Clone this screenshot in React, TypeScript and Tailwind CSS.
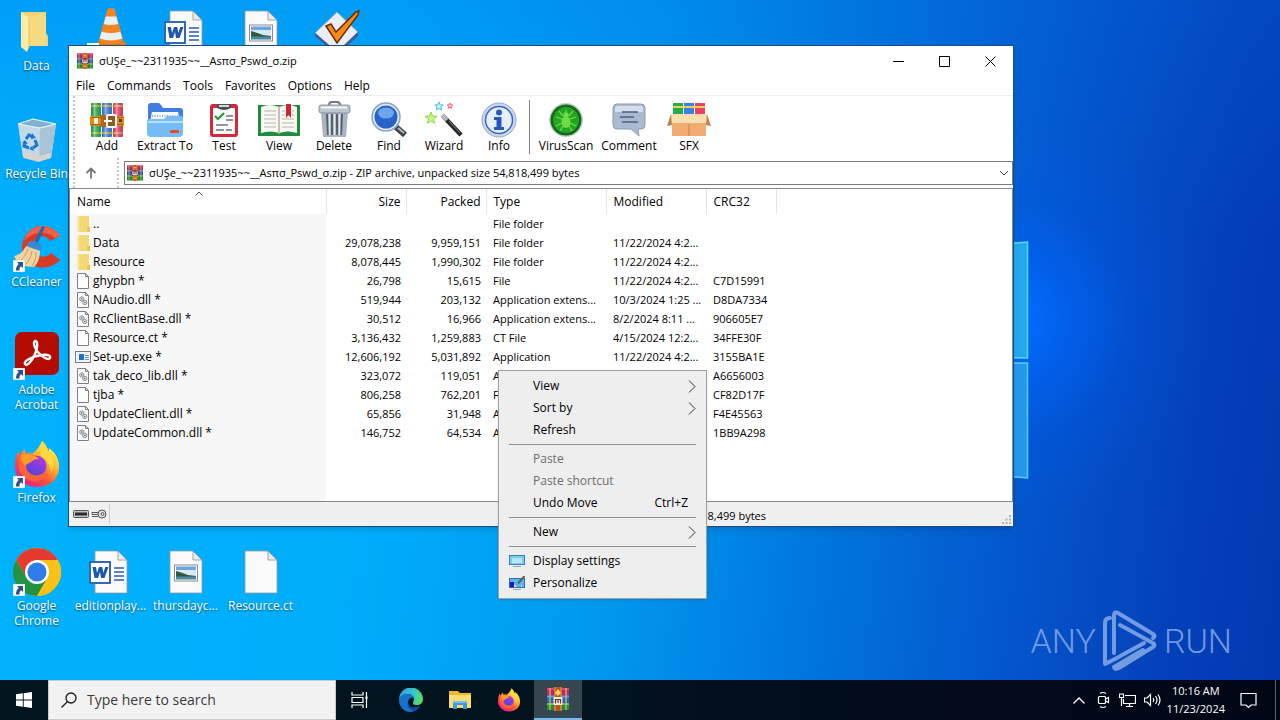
import type { ReactNode } from "react";

/* ---------- small drawing helpers ---------- */

function ShortcutArrow() {
  return (
    <svg viewBox="0 0 12 12" className="absolute bottom-0 left-0 h-3 w-3" aria-hidden="true">
      <rect width="12" height="12" fill="#fff" stroke="#c9d6e2" />
      <path d="M4 2h6v6L8.200 6.300C7 7 6.300 8.500 6.500 10.500H3C2.800 7.500 4 5.500 5.700 3.900z" fill="#2b4f8f" />
    </svg>
  );
}

function WinRarSmall({ className }: { className: string }) {
  return (
    <svg viewBox="0 0 16 16" className={className} aria-hidden="true">
      <rect x="0" y="0.500" width="16" height="5" fill="#a8266f" />
      <rect x="0" y="0.500" width="16" height="1.500" fill="#d8397f" />
      <rect x="0" y="5.500" width="16" height="5" fill="#2452b8" />
      <rect x="0" y="5.500" width="16" height="1.200" fill="#4b83e0" />
      <rect x="0" y="10.500" width="16" height="5" fill="#1b8a3d" />
      <rect x="0" y="10.500" width="16" height="1.300" fill="#45bd52" />
      <path d="M2 0.500v15M14 0.500v15" stroke="#e0b64a" strokeWidth="0.800" />
      <rect x="5.500" y="0" width="5" height="16" fill="#c0641c" />
      <path d="M6.200 0v16M9.800 0v16" stroke="#f0a040" strokeWidth="0.700" />
      <rect x="4.700" y="5.500" width="6.600" height="5.600" rx="1" fill="#7d2c22" />
      <path d="M5.900 6.300v3.500h4.200V6.300M8 6.800v3" stroke="#fff" strokeWidth="1" fill="none" />
      <circle cx="8" cy="2.800" r="0.800" fill="#ffe08a" />
      <circle cx="8" cy="13.300" r="0.800" fill="#ffe08a" />
    </svg>
  );
}

function WinRarTask() {
  return (
    <svg viewBox="0 0 24 24" className="h-6 w-6" aria-hidden="true">
      <rect x="1" y="1" width="22" height="7" fill="#b8246f" />
      <rect x="1" y="1" width="22" height="2" fill="#e0457f" />
      <rect x="1" y="8.500" width="22" height="7" fill="#2a63c4" />
      <rect x="1" y="8.500" width="22" height="2" fill="#5f9be8" />
      <rect x="1" y="16" width="22" height="7" fill="#1f8f3f" />
      <rect x="1" y="16" width="22" height="2" fill="#5cc65b" />
      <path d="M4 1v22M20 1v22" stroke="#e6bd52" strokeWidth="1.200" />
      <rect x="8" y="0" width="8" height="24" fill="#b5561b" />
      <path d="M9 0v24M15 0v24" stroke="#f0a040" strokeWidth="1" />
      <path d="M12 2l3 4-3 3-3-3z" fill="#ffd25a" />
      <rect x="7.500" y="10" width="9" height="8" rx="1" fill="#f7efe2" />
      <path d="M9.500 16.500v-4h5v4M12 13v3" stroke="#6b2b1a" strokeWidth="1.200" fill="none" />
    </svg>
  );
}

function Firefox({ className }: { className: string }) {
  return (
    <svg viewBox="0 0 48 48" className={className} aria-hidden="true">
      <defs>
        <linearGradient id="ffBody" x1="0.850" y1="0.100" x2="0.200" y2="0.950">
          <stop offset="0" stopColor="#fff44f" />
          <stop offset="0.350" stopColor="#ffb02e" />
          <stop offset="0.620" stopColor="#ff5a35" />
          <stop offset="1" stopColor="#f0188b" />
        </linearGradient>
        <linearGradient id="ffGlobe" x1="0.800" y1="0" x2="0.300" y2="1">
          <stop offset="0" stopColor="#b833e1" />
          <stop offset="1" stopColor="#5346d8" />
        </linearGradient>
      </defs>
      <path
        d="M5 11c1 2 1.500 3 2.500 4 1-3 2.500-5 4.500-6 0 2 .5 3.500 1.500 4.500 2-.5 4-.5 6 0C24 10 27 6 29 1c3 3 5 5 6 10 1-1 1-2 1-3 7 5 11 12 10 21C45 40 36 47 24 47S2 38 2 27c0-6 1-11 3-16z"
        fill="url(#ffBody)"
      />
      <circle cx="23" cy="26" r="10.500" fill="url(#ffGlobe)" />
      <path d="M7 16c3-2 8-2 13-1 3 1 5 2 6 4-3 0-6 1-7 3-3 1-6 2-6 5 1 6 7 9 13 8 4-1 6-3 8-6 1 7-5 12-12 12C12 41 6 34 6 25c0-4 0-6 1-9z" fill="#ff6a30" opacity="0.850" />
      <circle cx="23.500" cy="25.500" r="8.500" fill="url(#ffGlobe)" />
      <path d="M8 15c4-2 9-1 14 1 2 1 3 2 4 3-4 0-6 1-8 3-2 1-5 2-6 4-3-3-4-7-4-11z" fill="#ff9a2b" />
      <path d="M29 1c3 3 5 5 6 10 6 6 7 14 3 22 0-6-3-12-8-15-4-4-4-10-1-17z" fill="#ffd93b" />
    </svg>
  );
}

function FolderIcon({ className }: { className: string }) {
  return (
    <svg viewBox="0 0 28 42" className={className} aria-hidden="true">
      <path d="M0 1h25v21l2 3v10H8L0 34z" fill="#f2d272" />
      <path d="M0 1l8 6v29l-2 5-6-5z" fill="#ffeaa6" />
      <path d="M8 6l17-5v34H8z" fill="#f8dd88" opacity="0.700" />
      <path d="M8 7v30" stroke="#d9b95c" strokeWidth="0.800" />
    </svg>
  );
}

function Page({ children, className }: { children?: ReactNode; className: string }) {
  return (
    <svg viewBox="0 0 48 48" className={className} aria-hidden="true">
      <path d="M8 3h23l9 9v33H8z" fill="#fafafa" stroke="#9b9b9b" strokeWidth="0.800" />
      <path d="M31 3v9h9z" fill="#e7edf2" stroke="#8f8f8f" strokeWidth="0.800" />
      {children}
    </svg>
  );
}

function WordDoc() {
  return (
    <Page className="h-12 w-12">
      <path d="M27 20h10M27 24h10M27 28h10M27 32h10" stroke="#2b5cb0" strokeWidth="1.300" />
      <rect x="2" y="13" width="22" height="23" fill="#fff" />
      <rect x="3" y="14" width="20" height="21" fill="#fff" stroke="#1f57ad" strokeWidth="1.800" />
      <path d="M5.500 19l2 11h3.500l2-6 1 6h3.500l4-11h-3.200l-2 6-1-6h-3.300l-2 6-1-6z" fill="#1f57ad" />
    </Page>
  );
}

function ImageDoc() {
  return (
    <Page className="h-12 w-12">
      <rect x="12.500" y="17" width="23" height="16" fill="#fff" stroke="#8b8b8b" />
      <rect x="14" y="18.500" width="20" height="13" fill="#d5e9f7" />
      <rect x="14" y="18.500" width="20" height="3.500" fill="#6fa5dd" />
      <path d="M14 23l5 1.500 7 2.500 8 1v1H14z" fill="#2f5a3c" />
      <rect x="14" y="28.500" width="20" height="3" fill="#4a8aa8" />
    </Page>
  );
}

function Vlc() {
  return (
    <svg viewBox="0 0 48 48" className="h-12 w-12" aria-hidden="true">
      <path d="M10 34h28l5 10H5z" fill="#f07a12" />
      <path d="M20.500 1q3.500-2 7 0l9 32q-12.500 6-25 0z" fill="#f5841f" />
      <path d="M18.700 8.500h10.600l2 7.500q-7.300 2-14.600 0z" fill="#eceff1" />
      <path d="M14.700 23.500q9.300 3 18.600 0l2 7q-11.300 4-22.600 0z" fill="#eceff1" />
      <rect x="0" y="35" width="12" height="12" fill="#fff" />
      <path d="M4 38h5v5z" fill="#1c4f9c" />
    </svg>
  );
}

function CheckDiamond() {
  return (
    <svg viewBox="0 0 48 48" className="h-12 w-12" aria-hidden="true">
      <path d="M3 25L25 4l21 20-21 20z" fill="#e9edf4" stroke="#93a1b8" />
      <path d="M3 25l22 19 21-20v4L25 47 3 28z" fill="#41598c" />
      <path d="M14 18l5-2 5 8L44 4l3-1-1 4-21 28z" fill="#f58a1c" stroke="#6c2c08" strokeWidth="1.500" />
    </svg>
  );
}

function RecycleBin() {
  return (
    <svg viewBox="0 0 48 48" className="h-12 w-12" aria-hidden="true">
      <path d="M5 8l15-5 23 5-5 34-12 3-16-4z" fill="#a9c9dc" opacity="0.900" />
      <path d="M5 8l22 4 16-4-5 34-12 3-16-4z" fill="#c9dde9" opacity="0.850" />
      <path d="M27 12l16-4-5 34-12 3z" fill="#a5bfd0" opacity="0.850" />
      <path d="M5 8l15-5 23 5-16 4z" fill="#7fb2cf" stroke="#eef6fb" strokeWidth="1.200" />
      <path d="M9.500 36l16 4 13-3-1 5-12 4-15-4z" fill="#d8d3cd" />
      <g fill="none" stroke="#1a78d2" strokeWidth="3">
        <path d="M13 23l3-4 4 2" />
        <path d="M22 24l2 5-4 3" />
        <path d="M16 32l-5-2 1-4" />
      </g>
      <path d="M19 17l4 5-5 1zM21 35l-2-5-3 3zM9 27l3-3 3 4z" fill="#1a78d2" />
    </svg>
  );
}

function CCleaner() {
  return (
    <svg viewBox="0 0 48 48" className="h-12 w-12" aria-hidden="true">
      <path d="M47 12C41 2 28-1 19 5 8 12 6 27 13 36c8 10 25 10 34 0l-9-7c-4 5-12 5-15 0-4-5-3-12 1-15 5-3 10-2 13 3z" fill="#d93a25" />
      <path d="M47 12C41 2 28-1 19 5c-4 3-7 7-8 12 9-10 22-11 31-3z" fill="#ef6148" />
      <path d="M29 2l3 1-8 18-4-1z" fill="#2468b4" />
      <path d="M14 20c2-3 6-4 10-2 3 1 5 4 4 8l-14-3z" fill="#3c86d4" />
      <path d="M13 22l14 5c0 7-2 12-6 16C12 43 4 40 1 32c5-1 9-4 12-10z" fill="#f2d3a0" />
      <path d="M15 25c-2 6-5 9-8 12M19 27c-1 6-3 10-6 13M23 28c0 6-1 10-4 14" stroke="#c99d5e" strokeWidth="1" fill="none" />
    </svg>
  );
}

function Acrobat() {
  return (
    <svg viewBox="0 0 48 48" className="h-12 w-12" aria-hidden="true">
      <rect x="2" y="0" width="44" height="43" rx="7" fill="#b30b00" />
      <path
        d="M12 32c-2-3 8-8 17-9 6-1 9 1 8 3-2 3-9-2-13-7-3-4-4-9-2-10 3-1 3 7 0 13-3 7-8 13-10 10z"
        fill="none"
        stroke="#fff"
        strokeWidth="2.400"
      />
    </svg>
  );
}

function Chrome() {
  return (
    <svg viewBox="0 0 48 48" className="h-12 w-12" aria-hidden="true">
      <circle cx="24" cy="24" r="24" fill="#fbc116" />
      <path d="M24 0a24 24 0 0 1 20.800 12H24L13.600 30 3.200 12A24 24 0 0 1 24 0z" fill="#e33b2e" />
      <path d="M3.200 12A24 24 0 0 0 24 48l10.400-18-10.400-6-10.400 6z" fill="#229342" />
      <path d="M24 12h20.800A24 24 0 0 1 24 48l10.400-18z" fill="#fbc116" />
      <circle cx="24" cy="24" r="12" fill="#fff" />
      <circle cx="24" cy="24" r="9.600" fill="#2f7de9" />
    </svg>
  );
}

/* ---------- desktop ---------- */

type DesktopItem = { label: string; place: string; icon: ReactNode; shortcut?: boolean; hidden?: boolean };

const desktopItems: DesktopItem[] = [
  { label: "Data", place: "col-start-1 row-start-1", icon: <FolderIcon className="mr-1 h-[42px] w-7" /> },
  { label: "VLC media player", place: "col-start-2 row-start-1", icon: <Vlc />, hidden: true },
  { label: "Document", place: "col-start-3 row-start-1", icon: <WordDoc />, hidden: true },
  { label: "Picture", place: "col-start-4 row-start-1", icon: <ImageDoc />, hidden: true },
  { label: "Tasks", place: "col-start-5 row-start-1", icon: <CheckDiamond />, hidden: true },
  { label: "Recycle Bin", place: "col-start-1 row-start-2", icon: <RecycleBin /> },
  { label: "CCleaner", place: "col-start-1 row-start-3", icon: <CCleaner />, shortcut: true },
  { label: "Adobe Acrobat", place: "col-start-1 row-start-4", icon: <Acrobat />, shortcut: true },
  { label: "Firefox", place: "col-start-1 row-start-5", icon: <Firefox className="h-12 w-12" />, shortcut: true },
  { label: "Google Chrome", place: "col-start-1 row-start-6", icon: <Chrome />, shortcut: true },
  { label: "editionplay...", place: "col-start-2 row-start-6", icon: <WordDoc /> },
  { label: "thursdayc...", place: "col-start-3 row-start-6", icon: <ImageDoc /> },
  { label: "Resource.ct", place: "col-start-4 row-start-6", icon: <Page className="h-12 w-12" /> },
];

function DesktopIcons() {
  return (
    <div className="absolute top-2 left-0 grid auto-rows-[108px] grid-cols-[73px_repeat(4,75px)]">
      {desktopItems.map((item) => (
        <button
          key={item.label}
          aria-label={item.label}
          className={"flex flex-col items-center gap-0.5 text-xs leading-[15px] text-white [text-shadow:0_1px_2px_rgba(0,0,0,0.6)] " + item.place}
        >
          <span className="relative flex h-12 w-12 items-center justify-center">
            {item.icon}
            {item.shortcut && <ShortcutArrow />}
          </span>
          {!item.hidden && <span className="px-1 text-center">{item.label}</span>}
        </button>
      ))}
    </div>
  );
}

function Wallpaper() {
  return (
    <div className="absolute inset-0 bg-[linear-gradient(97deg,#00b2fe_0%,#00aefc_30%,#0098ee_50%,#0074dc_66%,#0455cc_80%,#0340b8_92%,#0238b0_100%)]">
      <div className="absolute inset-0 bg-[radial-gradient(circle_at_1010px_320px,rgba(0,112,255,1)_0,rgba(0,100,250,0.65)_60px,rgba(0,90,235,0.25)_120px,rgba(0,90,230,0)_200px)]" />
      <div className="absolute inset-0 bg-[linear-gradient(180deg,rgba(0,100,220,0.25)_0%,rgba(0,100,220,0)_35%)]" />
      <svg className="absolute top-[240px] left-[960px] h-[240px] w-[70px]" viewBox="0 0 70 240" aria-hidden="true">
        <path d="M0 8L67.500 2v116L0 116z" fill="#22a7f2" stroke="#4fe0ff" strokeWidth="1.500" />
        <path d="M0 123h67.500v115L0 232z" fill="#2596f0" stroke="#4fd4ff" strokeWidth="1.500" />
      </svg>
    </div>
  );
}

function Watermark() {
  return (
    <div className="absolute right-12 bottom-2 flex h-[62px] items-center gap-1.5 font-['Roboto','Liberation_Sans',sans-serif] text-[34px] leading-none font-light text-[#8fb0e8]/80">
      <span>ANY</span>
      <svg viewBox="0 0 56 62" className="h-[62px] w-14" fill="none" stroke="currentColor" strokeWidth="4" strokeLinecap="round" strokeLinejoin="round" aria-hidden="true">
        <path d="M8 8Q3 8 3 13v41l10-5 29-16M12 43V5q0-4 4-2l35 21q3 2 0 4M18 15l33 18q3 2 0 4L17 58q-4 2-5-1l29-17" />
      </svg>
      <span>RUN</span>
    </div>
  );
}

/* ---------- archive window ---------- */

function Books() {
  return (
    <>
      <defs>
        <linearGradient id="bookShade" x1="0" x2="1">
          <stop offset="0" stopColor="#000" stopOpacity="0.150" />
          <stop offset="0.350" stopColor="#fff" stopOpacity="0.400" />
          <stop offset="1" stopColor="#000" stopOpacity="0.100" />
        </linearGradient>
      </defs>
      <rect x="2" y="1" width="10" height="34" rx="1" fill="#22b04c" />
      <rect x="13" y="1" width="10" height="34" rx="1" fill="#3a80ea" />
      <rect x="24" y="1" width="10" height="34" rx="1" fill="#ee3f68" />
      <path d="M2 4h32M2 31h32" stroke="#e7c44e" strokeWidth="1.600" />
      <rect x="2" y="1" width="10" height="34" fill="url(#bookShade)" />
      <rect x="13" y="1" width="10" height="34" fill="url(#bookShade)" />
      <rect x="24" y="1" width="10" height="34" fill="url(#bookShade)" />
    </>
  );
}

const toolIcons: Record<string, ReactNode> = {
  Add: (
    <>
      <Books />
      <rect x="1" y="14" width="34" height="10" rx="1" fill="#e08a1e" />
      <path d="M2 15.500h32M2 22.500h32" stroke="#a35e14" strokeWidth="1" />
      <rect x="5" y="16" width="4" height="6" fill="#fff3cf" />
      <rect x="12" y="13" width="5" height="12" fill="#b5651a" />
      <rect x="18" y="13" width="9" height="12" rx="1" fill="#8a5a2a" stroke="#f6f6f6" strokeWidth="2" />
      <path d="M15 19h8" stroke="#fff" strokeWidth="2" />
      <rect x="30" y="17" width="3" height="3" fill="#6a3509" />
    </>
  ),
  "Extract To": (
    <>
      <path d="M1 4q0-3 3-3h7q2 0 3 2l2 3h17q3 0 3 3v18H1z" fill="#3f7ee0" />
      <path d="M5 10h26l2 10H3z" fill="#f7fafc" />
      <path d="M5 14h26" stroke="#7a8ba0" strokeWidth="1.500" strokeDasharray="1 1.500" />
      <path d="M0 19q0-2 2-2h15l3-3h14q2 0 2 2v15q0 4-4 4H4q-4 0-4-4z" fill="#74bdf8" />
      <path d="M1 20h35" stroke="#b9e0ff" strokeWidth="2" />
      <rect x="23" y="28" width="9" height="3" rx="1" fill="#e2492b" />
    </>
  ),
  Test: (
    <>
      <rect x="4" y="2" width="28" height="33" rx="3" fill="#d3283c" />
      <rect x="7" y="6" width="22" height="26" fill="#fbfbfb" />
      <path d="M11 2h14v4q-7 4-14 0z" fill="#4b4f57" />
      <path d="M13 4h10" stroke="#d5d8dc" strokeWidth="2" />
      <path d="M9 14l3 3 6-6" fill="none" stroke="#1e9a3d" strokeWidth="2.200" />
      <path d="M20 14h7M20 18h7M10 23h12M10 28h8M20 28h6" stroke="#6f757d" strokeWidth="1.300" />
    </>
  ),
  View: (
    <>
      <path d="M-3 3h42v31H-3z" fill="#1f8b3c" />
      <path d="M0 5q9-4 18 0v26q-9-3-18 0zM36 5q-9-4-18 0v26q9-3 18 0z" fill="#faf8f2" />
      <path d="M18 4v28" stroke="#b3aea3" strokeWidth="1.500" />
      <path d="M3 9h12M3 13h12M3 17h12M3 21h12M3 25h12M21 17h12M21 21h12M21 25h12M21 13h3M21 9h3M31 9h2M31 13h2" stroke="#b9b5aa" />
      <path d="M25 2h5v14l-2.500-3-2.500 3z" fill="#cc2436" />
    </>
  ),
  Delete: (
    <>
      <path d="M13 3q0-3 3-3h5q3 0 3 3" fill="none" stroke="#6e7885" strokeWidth="2" />
      <path d="M5 10h27l-2 25H7z" fill="#a9b4c0" />
      <path d="M11 12l1 21M16 12v21M21 12v21M26 12l-1 21" stroke="#52606f" strokeWidth="2" />
      <path d="M13.500 12v21M18.500 12v21M23.500 12v21" stroke="#e6ebf0" strokeWidth="1.500" />
      <rect x="3" y="3" width="31" height="8" rx="2" fill="#bcc6d0" stroke="#77828f" strokeWidth="0.800" />
      <path d="M5 5.500h26" stroke="#f4f7f9" strokeWidth="2" />
    </>
  ),
  Find: (
    <>
      <path d="M25 25l9 8" stroke="#3f4650" strokeWidth="6" />
      <path d="M27 26l6 5" stroke="#aeb6bf" strokeWidth="2" />
      <circle cx="15" cy="15" r="14" fill="#dfe8f5" stroke="#8ea2bd" strokeWidth="1.500" />
      <circle cx="15" cy="15" r="11.500" fill="#2764c8" />
      <ellipse cx="15" cy="11" rx="8" ry="5.500" fill="#6ea5ef" />
    </>
  ),
  Wizard: (
    <>
      <path d="M17 14l18 19" stroke="#25272b" strokeWidth="4.500" />
      <path d="M16 13l5 5" stroke="#b5bac1" strokeWidth="4.500" />
      <path d="M23 19l11 12" stroke="#7c828a" strokeWidth="1" />
      <path d="M13 0l1.200 2.800 3 .2-2.300 2 .8 3L13 6.500 10.300 8l.8-3-2.300-2 3-.2z" fill="#c8f3ff" stroke="#3ec4ea" />
      <path d="M5 10l1.500 4 4.500.3-3.500 2.700 1.200 4.300L5 19l-3.700 2.300L2.500 17-1 14.300l4.500-.3z" fill="#c8f28a" stroke="#8ad94a" />
      <path d="M24 1l.8 1.800 2 .2-1.500 1.300.5 2L24 5.200l-1.800 1.100.5-2L21.200 3l2-.2z" fill="#ffd8dc" stroke="#ee6474" />
    </>
  ),
  Info: (
    <>
      <circle cx="18" cy="18" r="17" fill="#c9d6ea" stroke="#98abc9" />
      <circle cx="18" cy="18" r="13.500" fill="#e6effb" stroke="#3768c4" strokeWidth="1.500" />
      <circle cx="18" cy="10.500" r="3" fill="#2458c2" />
      <path d="M13 15h7.500v10H23v3H13v-3h2.500v-7H13z" fill="#2458c2" />
    </>
  ),
  VirusScan: (
    <>
      <circle cx="18" cy="18" r="17" fill="#c8ccc8" />
      <circle cx="18" cy="18" r="15.500" fill="#14661a" />
      <circle cx="18" cy="18" r="13" fill="#22a522" />
      <path d="M18 8v4M11 9l4 5M25 9l-4 5M8 15l6 2M28 15l-6 2M8 24l6-3M28 24l-6-3M12 29l3-5M24 29l-3-5" stroke="#6fdc48" strokeWidth="1.300" />
      <ellipse cx="18" cy="20" rx="4.500" ry="6" fill="#6fdc48" />
      <circle cx="18" cy="13" r="2.700" fill="#6fdc48" />
    </>
  ),
  Comment: (
    <>
      <path d="M6 2h24q4 0 4 4v17q0 4-4 4h-3l1 7-8-7H6q-4 0-4-4V6q0-4 4-4z" fill="#a9bad1" stroke="#8b9bb3" />
      <path d="M6 4h24q2 0 2 3v3H4V7q0-3 2-3z" fill="#d4dfec" />
      <path d="M11 10h16M9 15h14M11 20h16" stroke="#4a5f80" strokeWidth="1.700" />
    </>
  ),
  SFX: (
    <>
      <rect x="2" y="1" width="10" height="14" fill="#22b04c" />
      <rect x="13" y="1" width="10" height="14" fill="#3a80ea" />
      <rect x="24" y="1" width="10" height="14" fill="#ee3f68" />
      <path d="M2 5h32" stroke="#f0d24e" strokeWidth="2" />
      <path d="M1 18h34v16H1z" fill="#f2ab72" />
      <path d="M0 12h36l2 9H-2z" fill="#f9dfae" />
      <path d="M0 12l-4 12 5-1zM36 12l4 12-5-1z" fill="#c27f4a" />
      <path d="M18 22v12" stroke="#c9824a" />
    </>
  ),
};

const tools = [
  { name: "Add", width: "w-[56px]" },
  { name: "Extract To", width: "w-[60px]" },
  { name: "Test", width: "w-[58px]" },
  { name: "View", width: "w-[52px]" },
  { name: "Delete", width: "w-[58px]" },
  { name: "Find", width: "w-[52px]" },
  { name: "Wizard", width: "w-[58px]" },
  { name: "Info", width: "w-[52px]" },
];
const extraTools = [
  { name: "VirusScan", width: "w-[64px]" },
  { name: "Comment", width: "w-[62px]" },
  { name: "SFX", width: "w-[58px]" },
];

function ToolButton({ name, width }: { name: string; width: string }) {
  return (
    <button className={"flex flex-col items-center text-xs leading-4 whitespace-nowrap " + width}>
      <svg viewBox="0 0 36 36" className="h-9 w-9 overflow-visible" aria-hidden="true">
        {toolIcons[name]}
      </svg>
      {name}
    </button>
  );
}

type FileRow = { name: string; kind: "folder" | "page" | "dll" | "exe"; size?: string; packed?: string; type: string; modified?: string; crc?: string };

const files: FileRow[] = [
  { name: "..", kind: "folder", type: "File folder" },
  { name: "Data", kind: "folder", size: "29,078,238", packed: "9,959,151", type: "File folder", modified: "11/22/2024 4:2..." },
  { name: "Resource", kind: "folder", size: "8,078,445", packed: "1,990,302", type: "File folder", modified: "11/22/2024 4:2..." },
  { name: "ghypbn *", kind: "page", size: "26,798", packed: "15,615", type: "File", modified: "11/22/2024 4:2...", crc: "C7D15991" },
  { name: "NAudio.dll *", kind: "dll", size: "519,944", packed: "203,132", type: "Application extens...", modified: "10/3/2024 1:25 ...", crc: "D8DA7334" },
  { name: "RcClientBase.dll *", kind: "dll", size: "30,512", packed: "16,966", type: "Application extens...", modified: "8/2/2024 8:11 ...", crc: "906605E7" },
  { name: "Resource.ct *", kind: "page", size: "3,136,432", packed: "1,259,883", type: "CT File", modified: "4/15/2024 12:2...", crc: "34FFE30F" },
  { name: "Set-up.exe *", kind: "exe", size: "12,606,192", packed: "5,031,892", type: "Application", modified: "11/22/2024 4:2...", crc: "3155BA1E" },
  { name: "tak_deco_lib.dll *", kind: "dll", size: "323,072", packed: "119,051", type: "A", crc: "A6656003" },
  { name: "tjba *", kind: "page", size: "806,258", packed: "762,201", type: "F", crc: "CF82D17F" },
  { name: "UpdateClient.dll *", kind: "dll", size: "65,856", packed: "31,948", type: "A", crc: "F4E45563" },
  { name: "UpdateCommon.dll *", kind: "dll", size: "146,752", packed: "64,534", type: "A", crc: "1BB9A298" },
];

function FileIcon({ kind }: { kind: FileRow["kind"] }) {
  return (
    <svg viewBox="0 0 16 16" className="h-4 w-4 shrink-0" aria-hidden="true">
      {kind === "folder" && (
        <>
          <path d="M2 0h12v10l1 1v5H2z" fill="#f5d977" />
          <path d="M2 0h2v16H2z" fill="#fbe9a8" />
          <path d="M12 11h3v5h-3z" fill="#e9c44f" />
        </>
      )}
      {(kind === "page" || kind === "dll") && (
        <path d="M2.500 0.500h8l3 3v12h-11zM10.500 0.500v3h3" fill="#fdfdfd" stroke="#7f7f7f" />
      )}
      {kind === "dll" && (
        <>
          <circle cx="6.800" cy="7" r="2.200" fill="#dfe3e8" stroke="#8b939d" />
          <circle cx="9.800" cy="10.500" r="2.200" fill="#dfe3e8" stroke="#8b939d" />
          <circle cx="6.800" cy="7" r="0.700" fill="#555" />
          <circle cx="9.800" cy="10.500" r="0.700" fill="#555" />
        </>
      )}
      {kind === "exe" && (
        <>
          <rect x="0.500" y="2.500" width="15" height="11" fill="#f5f5f5" stroke="#7b7b7b" />
          <rect x="4" y="5" width="5" height="6" fill="#1473d0" />
          <path d="M10 6.500h4M10 8.500h4M10 10.500h4" stroke="#5c93c8" />
        </>
      )}
    </svg>
  );
}

const cell = "overflow-hidden p-0 whitespace-nowrap";

function FileList() {
  const head = "relative border-r border-[#e5e5e5] p-0 font-normal";
  return (
    <div className="flex min-h-0 flex-1 flex-col border border-[#828790] bg-white">
      <table className="w-full table-fixed border-collapse text-xs leading-[19px]">
        <colgroup>
          <col className="w-64" />
          <col className="w-20" />
          <col className="w-20" />
          <col className="w-[120px]" />
          <col className="w-[100px]" />
          <col className="w-[70px]" />
          <col />
        </colgroup>
        <thead>
          <tr className="h-[25px]">
            <th className={head + " pl-[7px] text-left"}>
              Name
              <svg viewBox="0 0 8 5" className="absolute top-0.5 left-[125px] h-[5px] w-2" fill="none" stroke="#555" aria-hidden="true">
                <path d="M0.500 4.500L4 1l3.500 3.500" />
              </svg>
            </th>
            <th className={head + " pr-[5px] text-right"}>Size</th>
            <th className={head + " pr-[5px] text-right"}>Packed</th>
            <th className={head + " pl-[7px] text-left"}>Type</th>
            <th className={head + " pl-[7px] text-left"}>Modified</th>
            <th className={head + " pl-[7px] text-left"}>CRC32</th>
            <th className="p-0" aria-label="More columns" />
          </tr>
        </thead>
        <tbody>
          {files.map((f) => (
            <tr key={f.name} className="h-[19px] text-[11px]">
              <td className={cell + " bg-[#f7f7f7] pl-[5px] text-xs"}>
                <span className="flex h-[19px] items-center gap-0.5">
                  <FileIcon kind={f.kind} />
                  {f.name}
                </span>
              </td>
              <td className={cell + " pr-[5px] text-right"}>{f.size}</td>
              <td className={cell + " pr-[5px] text-right"}>{f.packed}</td>
              <td className={cell + " pl-[7px]"}>{f.type}</td>
              <td className={cell + " pl-[7px]"}>{f.modified}</td>
              <td className={cell + " pl-[7px]"}>{f.crc}</td>
              <td />
            </tr>
          ))}
        </tbody>
      </table>
      <div className="w-64 flex-1 bg-[#f7f7f7]" />
    </div>
  );
}

const archive = "σUŞe_~~2311935~~__Asπσ_Pswd_σ.zip";

function ArchiveWindow() {
  return (
    <section className="absolute top-[45px] left-[68px] flex h-[482px] w-[946px] flex-col border border-[#1d4f7c] bg-white text-black shadow-md">
      <header className="flex h-[30px] items-center pl-2">
        <WinRarSmall className="h-4 w-4" />
        <h1 className="flex-1 pl-1.5 text-[11px]">{archive}</h1>
        <button aria-label="Minimize" className="flex h-full w-[45px] items-center justify-center">
          <svg viewBox="0 0 11 11" className="h-[11px] w-[11px]" stroke="#000" aria-hidden="true"><path d="M0 5.500h11" /></svg>
        </button>
        <button aria-label="Maximize" className="flex h-full w-[46px] items-center justify-center">
          <svg viewBox="0 0 11 11" className="h-[11px] w-[11px]" stroke="#000" fill="none" aria-hidden="true"><path d="M0.500 0.500h10v10h-10z" /></svg>
        </button>
        <button aria-label="Close" className="flex h-full w-[46px] items-center justify-center">
          <svg viewBox="0 0 11 11" className="h-[11px] w-[11px]" stroke="#000" fill="none" aria-hidden="true"><path d="M0.500 0.500l10 10M10.500 0.500l-10 10" /></svg>
        </button>
      </header>

      <nav className="flex h-5 items-center gap-3 border-b border-[#ececec] pl-[7px] text-xs">
        {["File", "Commands", "Tools", "Favorites", "Options", "Help"].map((m) => (
          <button key={m}>{m}</button>
        ))}
      </nav>

      <div className="ml-1 flex h-[62px] items-start border-l-2 border-dotted border-[#c4c4c4] pt-1.5 pl-1">
        {tools.map((t) => (
          <ToolButton key={t.name} name={t.name} width={t.width} />
        ))}
        <div className="mx-1 -mt-0.5 h-[54px] w-px bg-[#808080]" />
        {extraTools.map((t) => (
          <ToolButton key={t.name} name={t.name} width={t.width} />
        ))}
      </div>

      <div className="ml-1 flex h-[30px] items-center border-l-2 border-dotted border-[#c4c4c4]">
        <button aria-label="Up one level" className="flex h-full w-8 items-center justify-center">
          <svg viewBox="0 0 12 12" className="h-3 w-3" fill="none" stroke="#777" strokeWidth="1.800" aria-hidden="true">
            <path d="M6 11.500V1.500M1.500 6L6 1.500 10.500 6" />
          </svg>
        </button>
        <div className="ml-2.5 h-full border-l-2 border-dotted border-[#c4c4c4]" />
        <div className="relative ml-[5px] flex h-6 flex-1 items-center border border-[#7a7a7a] pl-0.5">
          <WinRarSmall className="h-4 w-4" />
          <select aria-label="Archive path" className="h-5 flex-1 appearance-none bg-transparent pl-1.5 text-[11px] leading-5 outline-none">
            <option>{archive} - ZIP archive, unpacked size 54,818,499 bytes</option>
          </select>
          <svg viewBox="0 0 10 6" className="pointer-events-none absolute right-[3px] h-1.5 w-2.5" fill="none" stroke="#444" aria-hidden="true">
            <path d="M1 1l4 4 4-4" />
          </svg>
        </div>
      </div>

      <FileList />

      <footer className="flex h-6 items-center bg-[#f0f0f0] text-xs">
        <div className="flex h-5 items-center gap-0.5 border-r border-[#cfcfcf] pr-0.5 pl-1">
          <svg viewBox="0 0 16 8" className="h-2 w-4" aria-hidden="true">
            <rect x="0.500" y="0.500" width="15" height="7" rx="1" fill="#c4c4c4" stroke="#555" />
            <rect x="2" y="2.500" width="12" height="3" fill="#2b2b2b" />
          </svg>
          <svg viewBox="0 0 16 10" className="h-2.5 w-4" fill="none" stroke="#555" aria-hidden="true">
            <circle cx="11" cy="5" r="4" fill="#e4e4e4" />
            <circle cx="11.500" cy="5" r="1.500" />
            <path d="M7 3.500H1v2h6M1 7.500h6" />
          </svg>
        </div>
        <p className="w-[656px] pt-1 text-right text-[11px]">8,499 bytes</p>
        <svg viewBox="0 0 10 10" className="mt-3 mr-px ml-auto h-2.5 w-2.5" fill="#b5b5b5" aria-hidden="true">
          <path d="M7 0h2v2H7zM7 3.500h2v2H7zM7 7h2v2H7zM3.500 3.500h2v2h-2zM3.500 7h2v2h-2zM0 7h2v2H0z" />
        </svg>
      </footer>
    </section>
  );
}

/* ---------- context menu ---------- */

function MenuItem({ label, arrow, hint, disabled, icon }: { label: string; arrow?: boolean; hint?: string; disabled?: boolean; icon?: ReactNode }) {
  return (
    <button role="menuitem" disabled={disabled} className="flex h-[22px] w-full items-center pr-2.5 text-left text-black disabled:text-[#6d6d6d]">
      <span className="flex w-6 shrink-0">{icon}</span>
      <span className="flex-1">{label}</span>
      {hint && <span className="pr-2">{hint}</span>}
      {arrow && (
        <svg viewBox="0 0 8 13" className="h-[13px] w-2" fill="none" stroke="#333" aria-hidden="true">
          <path d="M1 0.500l6 6-6 6" />
        </svg>
      )}
    </button>
  );
}

function ContextMenu() {
  const rule = <div role="separator" className="my-[3px] mr-2.5 h-px bg-[#919191]" />;
  return (
    <div role="menu" className="absolute top-[370px] left-[498px] w-[209px] border border-[#a0a0a0] bg-[#eeeeee] py-1 pl-2.5 text-xs shadow-sm">
      <MenuItem label="View" arrow />
      <MenuItem label="Sort by" arrow />
      <MenuItem label="Refresh" />
      {rule}
      <MenuItem label="Paste" disabled />
      <MenuItem label="Paste shortcut" disabled />
      <MenuItem label="Undo Move" hint="Ctrl+Z" />
      {rule}
      <MenuItem label="New" arrow />
      {rule}
      <MenuItem
        label="Display settings"
        icon={
          <svg viewBox="0 0 16 12" className="h-3 w-4" aria-hidden="true">
            <rect x="0.500" y="0.500" width="15" height="9" fill="#7fcbf5" stroke="#3182b8" />
            <path d="M3 3h10v5H3z" fill="#b8e5ff" />
            <path d="M4 11.500h8" stroke="#8fa9ba" />
          </svg>
        }
      />
      <MenuItem
        label="Personalize"
        icon={
          <svg viewBox="0 0 16 14" className="h-3.5 w-4" aria-hidden="true">
            <rect x="0.500" y="2.500" width="15" height="9" fill="#58b5f2" stroke="#2f6f9f" />
            <path d="M1 6h4v5H1z" fill="#2a10c8" />
            <path d="M5 11V8l3 3h4l1-3v3z" fill="#e8f5ff" />
            <path d="M15.500 0L9 7.500" stroke="#5b5f66" strokeWidth="2" />
            <path d="M4 13.500h8" stroke="#8fa9ba" />
          </svg>
        }
      />
    </div>
  );
}

/* ---------- taskbar ---------- */

function Taskbar() {
  const slot = "flex h-full w-12 items-center justify-center";
  return (
    <footer className="flex h-10 shrink-0 items-stretch bg-[linear-gradient(90deg,#02161f_0%,#02131e_45%,#020a1a_75%,#020716_100%)] text-white">
      <button aria-label="Start" className="flex w-12 items-center justify-center">
        <svg viewBox="0 0 16 16" className="h-4 w-4" fill="#fff" aria-hidden="true">
          <path d="M0 2.300l6.800-1v6.300H0zM7.700 1.200L16 0v7.600H7.700zM0 8.500h6.800v6.300l-6.800-1zM7.700 8.500H16V16l-8.300-1.200z" />
        </svg>
      </button>
      <label className="flex w-72 items-center border border-[#c8c8c8] bg-[#f2f2f2] pl-3">
        <svg viewBox="0 0 16 16" className="h-4 w-4" fill="none" stroke="#1a1a1a" strokeWidth="1.300" aria-hidden="true">
          <circle cx="10" cy="6" r="5" />
          <path d="M6.500 9.500L0.500 15.500" />
        </svg>
        <input type="text" aria-label="Search" placeholder="Type here to search" className="ml-2.5 min-w-0 flex-1 bg-transparent text-sm text-black outline-none placeholder:text-[#3a3a3a]" />
      </label>
      <div className="flex gap-px pl-0.5">
        <button aria-label="Task View" className={slot}>
          <svg viewBox="0 0 18 16" className="mr-1 h-4 w-[18px]" fill="none" stroke="#fff" strokeWidth="1.200" aria-hidden="true">
            <path d="M1 0v3h11V0M1 16v-3h11v3M1 5.500h11v5H1zM15.500 0v16" />
            <path d="M14.500 4.500h2v2.500h-2z" fill="#fff" stroke="none" />
          </svg>
        </button>
        <button aria-label="Edge" className={slot}>
          <svg viewBox="0 0 24 24" className="h-6 w-6" aria-hidden="true">
            <defs>
              <linearGradient id="edgeTop" x1="0" x2="1" y1="0.300" y2="0.500">
                <stop offset="0" stopColor="#2ba4e8" />
                <stop offset="0.600" stopColor="#35c8c4" />
                <stop offset="1" stopColor="#5fdc5a" />
              </linearGradient>
            </defs>
            <path d="M0 12A12 12 0 0 1 24 11c0 4-3 6-6 6-4 0-4-1-4-2 0-2 1-2 1-4 0-3-3-5-7-5-4 0-7 3-8 6z" fill="url(#edgeTop)" />
            <path d="M0 12c1-4 4-6 8-6 4 0 7 2 7 5 0-2-6-2-6 4 0 5 6 6 12 3-3 4-6 6-10 6A11.500 11.500 0 0 1 0 12z" fill="#1672ca" />
            <path d="M9 13c-2 5 2 10 7 10 2-1 4-3 5-5-6 3-12 2-12-5z" fill="#0e4aa0" />
          </svg>
        </button>
        <button aria-label="File Explorer" className={slot}>
          <svg viewBox="0 0 22 20" className="h-5 w-[22px]" aria-hidden="true">
            <path d="M0 1h9l2 2h11v15H0z" fill="#eeb62c" />
            <path d="M0 5h22v13H0z" fill="#ffdb70" />
            <path d="M4 11h14v8h-4v-4H8v4H4z" fill="#3a9be0" />
            <path d="M4 11h14v2H4z" fill="#6fc0f2" />
          </svg>
        </button>
        <button aria-label="Firefox" className={slot}>
          <Firefox className="h-6 w-6" />
        </button>
        <button aria-label="WinRAR" className={slot + " border-b-2 border-[#76b9ed] bg-[#36464f]"}>
          <WinRarTask />
        </button>
      </div>
      <div className="ml-auto flex items-center">
        <div className="flex items-center gap-2 pr-1.5">
          <button aria-label="Show hidden icons">
            <svg viewBox="0 0 12 7" className="h-[7px] w-3" fill="none" stroke="#fff" strokeWidth="1.300" aria-hidden="true"><path d="M0.500 6.500L6 1l5.500 5.500" /></svg>
          </button>
          <button aria-label="Camera" className="pl-1">
            <svg viewBox="0 0 14 18" className="h-[18px] w-3.5" fill="none" stroke="#fff" strokeWidth="1.200" aria-hidden="true">
              <rect x="1.500" y="5.500" width="7" height="7" rx="1" />
              <path d="M8.500 8l3-1.500v5l-3-1.500M3 2.500q3-2 6 0M3 15.500q3 2 6 0" />
            </svg>
          </button>
          <button aria-label="Network">
            <svg viewBox="0 0 17 15" className="h-[15px] w-[17px]" fill="none" stroke="#fff" strokeWidth="1.200" aria-hidden="true">
              <path d="M6 2.500h10.500v8h-12V6M7 13.500h7M10.500 10.500v3M0.500 1h4v3.500h-4zM2.500 4.500V13" />
            </svg>
          </button>
          <button aria-label="Volume">
            <svg viewBox="0 0 17 14" className="h-3.5 w-[17px]" fill="none" stroke="#fff" strokeWidth="1.200" aria-hidden="true">
              <path d="M0.500 5h2.500L6.500 1.500v11L3 9H0.500zM9 5q1.500 2 0 4M11.500 3q3 4 0 8M14 1.500q4 5.500 0 11" />
            </svg>
          </button>
        </div>
        <time className="text-center text-[11px] leading-[18px]">
          10:16 AM
          <br />
          11/23/2024
        </time>
        <button aria-label="Notifications" className="flex w-[46px] items-center justify-center">
          <svg viewBox="0 0 17 17" className="h-[17px] w-[17px]" fill="none" stroke="#fff" strokeWidth="1.200" aria-hidden="true">
            <path d="M1 1.500h15v11.500h-5L8.500 15.500 6 13H1z" />
          </svg>
        </button>
        <button aria-label="Show desktop" className="ml-1 h-10 w-[5px] border-l border-[#5b6470]" />
      </div>
    </footer>
  );
}

export default function App() {
  return (
    <div className="flex h-screen flex-col overflow-hidden font-['Open_Sans','Noto_Sans',sans-serif]">
      <main className="relative min-h-0 flex-1 overflow-hidden">
        <Wallpaper />
        <DesktopIcons />
        <Watermark />
        <ArchiveWindow />
        <ContextMenu />
      </main>
      <Taskbar />
    </div>
  );
}
